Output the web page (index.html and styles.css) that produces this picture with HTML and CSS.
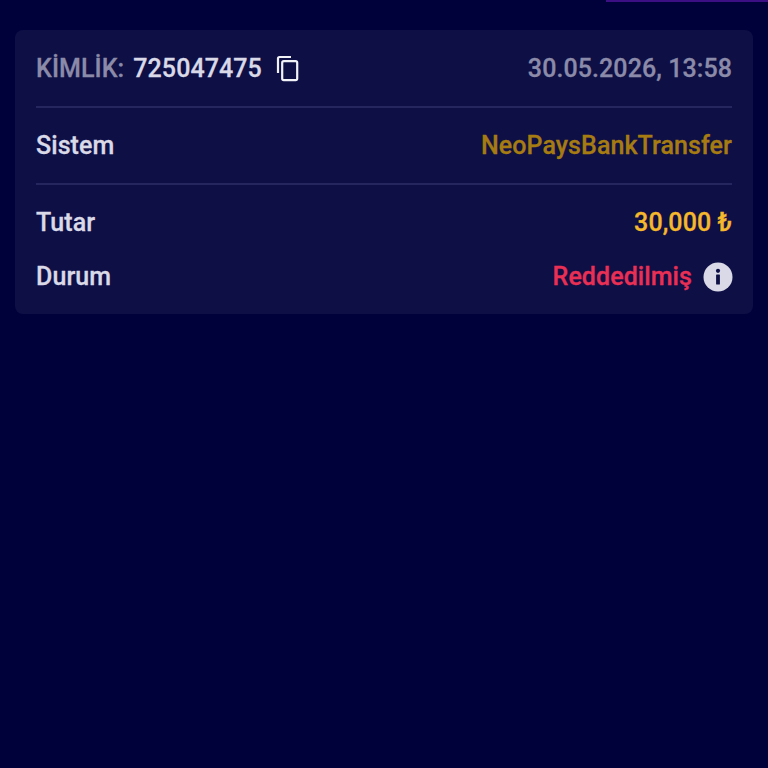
FILE: index.html
```html
<!DOCTYPE html>
<html lang="tr">
<head>
<meta charset="utf-8">
<title>İşlem</title>
<link rel="stylesheet" href="styles.css">
</head>
<body>
<div class="topbar"><div class="topbar-fill"></div></div>
<main class="page">
  <section class="card">
    <div class="row row-head">
      <div class="id">
        <span class="muted">KİMLİK:</span>
        <span class="light">725047475</span>
        <svg class="copy" width="24" height="28" viewBox="0 0 24 28" fill="none" stroke="#f1f1f8" stroke-width="2.2">
          <path d="M2 18V3.5A1.5 1.5 0 0 1 3.5 2H15"/>
          <rect x="6.2" y="6.2" width="15" height="19" rx="1.6"/>
        </svg>
      </div>
      <span class="muted">30.05.2026, 13:58</span>
    </div>
    <div class="row row-mid">
      <span class="light">Sistem</span>
      <span class="system">NeoPaysBankTransfer</span>
    </div>
    <div class="row row-amount">
      <span class="light">Tutar</span>
      <span class="amount">30,000 ₺</span>
    </div>
    <div class="row row-status">
      <span class="light">Durum</span>
      <div class="status">
        <span class="rejected">Reddedilmiş</span>
        <span class="info">
          <svg width="30" height="30" viewBox="0 0 30 30">
            <circle cx="15" cy="15" r="14.5" fill="#d9d9e8"/>
            <circle cx="15" cy="8.8" r="2.1" fill="#0e0f45"/>
            <rect x="13.1" y="12.6" width="3.8" height="9.8" rx="0.5" fill="#0e0f45"/>
          </svg>
        </span>
      </div>
    </div>
  </section>
</main>
</body>
</html>
```
FILE: styles.css
```css
* { box-sizing: border-box; }
html, body { margin: 0; height: 100%; }
body {
  background: #00003a;
  font-family: Roboto, "Noto Sans", sans-serif;
  font-size: 25px;
  font-weight: 500;
  line-height: 28px;
  letter-spacing: 0.08px;
  -webkit-text-stroke: 0.3px currentColor;
}
.topbar { height: 2px; display: flex; justify-content: flex-end; }
.topbar-fill { width: 162px; height: 2px; background: #3c0f85; }
.page { padding: 28px 15px 0; }
.card {
  background: #0e0f45;
  border-radius: 8px;
  padding: 0 21px;
  height: 284px;
  display: flex;
  flex-direction: column;
}
.row { display: flex; justify-content: space-between; align-items: center; }
.row-head { height: 78px; padding-top: 1px; border-bottom: 2px solid #25265e; }
.row-mid { height: 77px; border-bottom: 2px solid #25265e; }
.row-amount { height: 77px; padding-bottom: 2px; }
.row-status { height: 29px; }
.id { display: flex; align-items: center; gap: 9px; }
.copy { margin-left: 5px; }
.muted { color: #8b8ba9; }
.light { color: #d9d9e8; }
.system { color: #a67c12; }
.amount { color: #f5b72b; }
.rejected { color: #ea2f55; }
.status { display: flex; align-items: center; gap: 11px; }
.info { display: flex; width: 30px; height: 30px; margin-right: -1px; }
```
